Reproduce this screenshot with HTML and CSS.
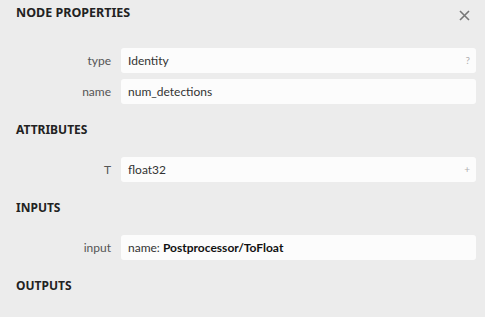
FILE: index.html
```html
<!DOCTYPE html>
<html lang="en">
<head>
    <meta charset="UTF-8">
    <meta name="viewport" content="width=device-width, initial-scale=1.0">
    <title>Node Properties</title>
    <link rel="stylesheet" href="styles.css">
</head>
<body>
    <div id="sidebar">
        <div class="sidebar-header">
            <div class="sidebar-title">NODE PROPERTIES</div>
            <svg class="close" width="11" height="11" viewBox="0 0 11 11">
                <path d="M1 1L10 10M10 1L1 10" stroke="#777" stroke-width="1.6" fill="none"/>
            </svg>
        </div>

        <div class="rows first">
            <div class="row">
                <div class="row-name">type</div>
                <div class="row-value">Identity<span class="row-btn">?</span></div>
            </div>
            <div class="row">
                <div class="row-name">name</div>
                <div class="row-value">num_detections</div>
            </div>
        </div>

        <div class="section-title">ATTRIBUTES</div>
        <div class="rows">
            <div class="row">
                <div class="row-name">T</div>
                <div class="row-value">float32<span class="row-btn">+</span></div>
            </div>
        </div>

        <div class="section-title">INPUTS</div>
        <div class="rows">
            <div class="row">
                <div class="row-name">input</div>
                <div class="row-value">name: <b>Postprocessor/ToFloat</b></div>
            </div>
        </div>

        <div class="section-title">OUTPUTS</div>
    </div>
</body>
</html>
```

FILE: styles.css
```css
*{
    box-sizing: border-box;
}
body{
    margin: 0;
    padding: 0;
    background-color: #ececec;
    font-family: "Noto Sans", "Open Sans", sans-serif;
    font-size: 12px;
}
#sidebar{
    padding: 3px 9px 0 16px;
}
.sidebar-header{
    display: flex;
    justify-content: space-between;
    align-items: center;
    height: 20px;
}
.sidebar-title, .section-title{
    font-weight: bold;
    color: #222;
    line-height: 20px;
    height: 20px;
}
.sidebar-title{
    font-size: 12.5px;
}
.close{
    margin-right: 6px;
    margin-top: 4px;
}
.rows{
    display: flex;
    flex-direction: column;
    gap: 6px;
    margin-top: 17px;
}
.rows.first{
    margin-top: 25px;
}
.section-title{
    margin-top: 16px;
}
.row{
    display: flex;
    align-items: center;
    height: 25px;
    font-family: Lato, "Noto Sans", sans-serif;
    font-size: 12px;
}
.row-name{
    width: 105px;
    text-align: right;
    padding-right: 10px;
    color: #555;
    line-height: 25px;
}
.row-value{
    flex: 1;
    height: 25px;
    line-height: 25px;
    background-color: #fcfcfc;
    border-radius: 3px;
    padding: 0 6px 0 7px;
    color: #333;
    display: flex;
    align-items: center;
    white-space: pre;
}
.row-value b{
    color: #111;
}
.row-btn{
    margin-left: auto;
    color: #b0b0b0;
    font-size: 10px;
}
```
